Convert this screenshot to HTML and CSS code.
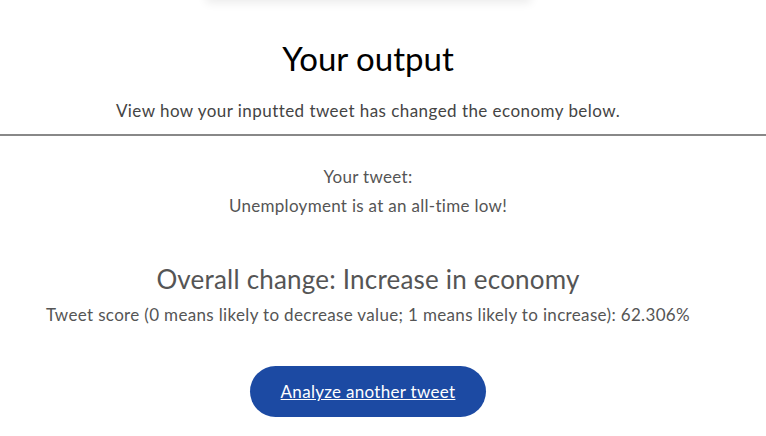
FILE: index.html
```html
<!DOCTYPE html>
<html lang="en">
<head>
  <meta charset="UTF-8" />
  <meta name="viewport" content="width=device-width, initial-scale=1.0" />
  <title>Your output</title>
  <link rel="stylesheet" href="styles.css">
</head>
<body>
  <div class="top-card"></div>

  <header class="intro">
    <h1>Your output</h1>
    <p>View how your inputted tweet has changed the economy below.</p>
  </header>
  <hr class="divider" />

  <main class="result">
    <section class="tweet">
      <p>Your tweet:</p>
      <p>Unemployment is at an all-time low!</p>
    </section>

    <section class="score">
      <h2>Overall change: Increase in economy</h2>
      <p>Tweet score (0 means likely to decrease value; 1 means likely to increase): 62.306%</p>
    </section>

    <a class="again" href="#">Analyze another tweet</a>
  </main>
</body>
</html>
```

FILE: styles.css
```css
* { margin: 0; padding: 0; box-sizing: border-box; }
body { font-family: 'Lato', sans-serif; background: #fff; color: #555; text-align: center; padding-right: 30px; }
.top-card { width: 325px; height: 20px; margin: -20px auto 0; background: #fff; box-shadow: 0 3px 10px rgba(0,0,0,0.08); }
.intro { padding-top: 38px; }
.intro h1 { font-size: 33px; font-weight: 400; color: #000; line-height: 40px; }
.intro p { margin-top: 22px; font-size: 17px; letter-spacing: 0.45px; color: #444; line-height: 22px; }
.divider { margin-top: 12px; margin-right: -30px; border: none; border-top: 2px solid #888; }
.result { display: flex; flex-direction: column; align-items: center; padding-top: 26px; }
.tweet p { font-size: 17px; letter-spacing: 0.3px; line-height: 29px; }
.score { margin-top: 44px; }
.score h2 { font-size: 26px; font-weight: 400; letter-spacing: 0.2px; line-height: 30px; }
.score p { margin-top: 10px; font-size: 17px; letter-spacing: 0.34px; line-height: 22px; }
.again { display: block; margin-top: 40px; width: 236px; height: 51px; line-height: 51px; border-radius: 26px; background: #1c4aa3; color: #fff; font-size: 17px; letter-spacing: 0.3px; text-decoration: underline; }
```
